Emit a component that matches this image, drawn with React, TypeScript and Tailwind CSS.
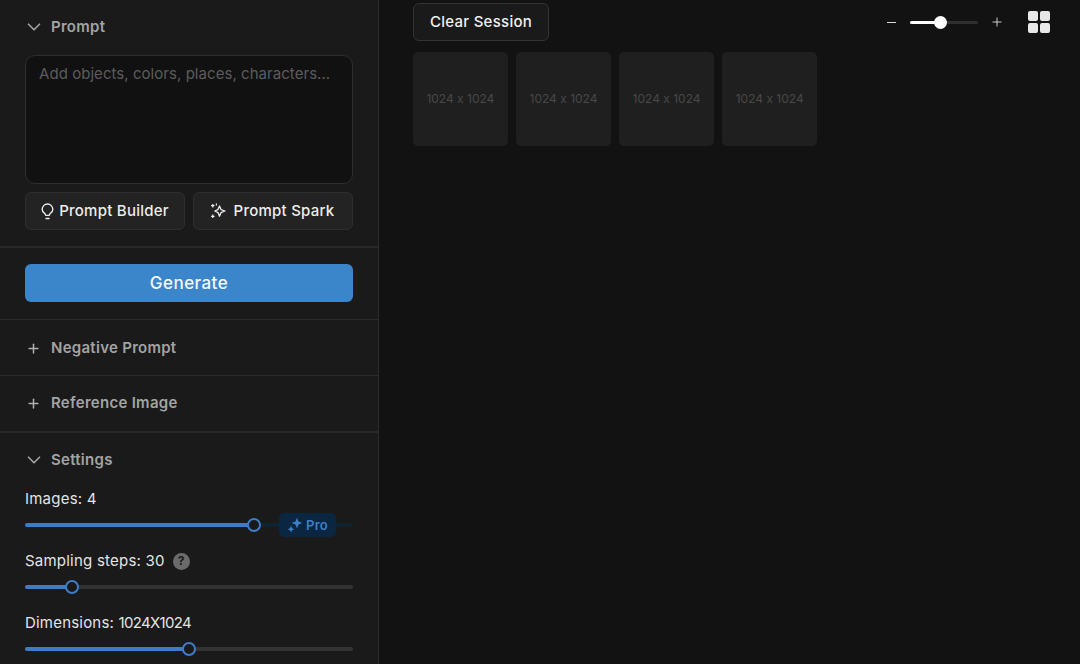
import { ChevronDown, Plus } from "lucide-react";

const FONT = "font-['Inter','Liberation_Sans',sans-serif]";

function SectionHeader({ title, open }: { title: string; open?: boolean }) {
  return (
    <div className="flex h-[20px] items-center gap-[10px] pl-[26px] text-[#a3a3a3]">
      {open ? (
        <ChevronDown className="-mx-[3.5px] h-[22px] w-[22px] shrink-0" strokeWidth={1.8} />
      ) : (
        <Plus className="h-[15px] w-[15px] shrink-0 text-[#b0b0b0]" strokeWidth={2.4} />
      )}
      <span className="text-[15px] font-semibold leading-[20px] tracking-[0.28px]">{title}</span>
    </div>
  );
}

function Slider({ percent, locked }: { percent: number; locked?: boolean }) {
  return (
    <div className={`relative h-[4px] rounded-full ${locked ? "bg-[#10242f]" : "bg-[#333333]"}`}>
      <div
        className="absolute left-0 top-0 h-[4px] rounded-full bg-[#3f7cc8]"
        style={{ width: `${percent}%` }}
      />
      <div
        className="absolute top-[-5px] ml-[-7px] h-[14px] w-[14px] rounded-full border-2 border-[#3f7cc8] bg-[#1a1a1a]"
        style={{ left: `${percent}%` }}
      />
      {locked && (
        <div className="absolute left-[254px] top-[-10px] flex h-[24px] w-[57px] items-center justify-center gap-[3px] rounded-[5px] bg-[#0b2640] text-[#3f7fc4]">
          <svg viewBox="0 0 16 16" className="h-[16px] w-[16px]" fill="currentColor">
            <path d="M10 .8 11.5 4.6 15.4 6 11.5 7.5 10 11.4 8.5 7.5 4.6 6 8.5 4.6z" />
            <path d="M4 8.8 5 11.2 7.4 12.2 5 13.2 4 15.6 3 13.2.6 12.2 3 11.2z" />
          </svg>
          <span className="text-[13px] font-semibold">Pro</span>
        </div>
      )}
    </div>
  );
}

function OutlineButton({ children, className }: { children: React.ReactNode; className: string }) {
  return (
    <button
      className={`flex h-[38px] items-center justify-center rounded-[6px] border border-[#2e2e2e] bg-[#232323] pr-[2px] text-[15px] font-medium tracking-[0.25px] text-[#ededed] ${className}`}
    >
      {children}
    </button>
  );
}

export default function App() {
  return (
    <div className={`flex h-[664px] w-[1080px] overflow-hidden bg-[#121212] ${FONT}`}>
      {/* Left side - form */}
      <aside className="h-full w-[379px] shrink-0 border-r border-[#2c2c2c] bg-[#1a1a1a]">
        <div className="border-b-2 border-[#282828] pb-[16px] pt-[17px]">
          <SectionHeader title="Prompt" open />
          <div className="mx-[25px] mt-[18px]">
            <div className="h-[129px] whitespace-nowrap rounded-[10px] border border-[#2e2e2e] bg-[#111111] px-[13px] py-[8px] text-[15px] leading-[20px] tracking-[0.05px] text-[#5c5c5c]">
              Add objects, colors, places, characters...
            </div>
            <div className="mt-[8px] flex gap-[8px]">
              <OutlineButton className="w-[160px] gap-[3px]">
                <svg viewBox="0 0 16 16" className="h-[17px] w-[17px]" fill="none" stroke="currentColor" strokeWidth="1.3" strokeLinecap="round" strokeLinejoin="round">
                  <path d="M6.3 11.6C6.3 9.8 3 8.9 3 6a5 5 0 0 1 10 0c0 2.9-3.3 3.8-3.3 5.6z" />
                  <path d="M6.6 14.6h2.8" />
                </svg>
                Prompt Builder
              </OutlineButton>
              <OutlineButton className="w-[160px] gap-[8px]">
                <svg viewBox="0 0 16 16" className="h-[16px] w-[16px]" fill="none" stroke="currentColor" strokeWidth="1.3" strokeLinejoin="round">
                  <path d="M9.5 3 11 6.6 15 8 11 9.6 9.5 13.2 8 9.6 4.8 8 8 6.6z" />
                  <path d="M2.8 1v3.4M1.1 2.7h3.4M2.8 11.6V15M1.1 13.3h3.4M6.4 .6v2" strokeWidth="1.2" />
                </svg>
                Prompt Spark
              </OutlineButton>
            </div>
          </div>
        </div>

        <div className="border-b border-[#2c2c2c] px-[25px] pb-[17px] pt-[16px]">
          <button className="flex h-[38px] w-full items-center justify-center rounded-[6px] bg-[#3b86cb] pt-[2px] text-[17px] font-medium tracking-[0.45px] text-[#f4f8fc]">
            Generate
          </button>
        </div>

        <div className="border-b border-[#2c2c2c] pb-[17px] pt-[18px]">
          <SectionHeader title="Negative Prompt" />
        </div>
        <div className="border-b-2 border-[#282828] pb-[18px] pt-[17px]">
          <SectionHeader title="Reference Image" />
        </div>

        <div className="pt-[17px]">
          <SectionHeader title="Settings" open />
          <div className="mt-[19px] px-[25px] text-[15px] leading-[20px] tracking-[0.22px] text-[#e4e4e4]">
            <div>Images: 4</div>
            <div className="mb-[24px] mt-[14px]">
              <Slider percent={69.8} locked />
            </div>
            <div className="flex items-center gap-[8px]">
              Sampling steps: 30
              <span className="flex h-[17px] w-[17px] items-center justify-center rounded-full bg-[#6b6b6b] text-[12px] font-bold text-[#1a1a1a]">
                ?
              </span>
            </div>
            <div className="mb-[24px] mt-[14px]">
              <Slider percent={14.3} />
            </div>
            <div className="tracking-[0.2px]">
              Dimensions: <span className="tracking-[-0.68px]">1024X1024</span>
            </div>
            <div className="mt-[14px]">
              <Slider percent={50} />
            </div>
          </div>
        </div>
      </aside>

      {/* Right side - results */}
      <main className="min-w-0 flex-1 pl-[34px] pr-[30px] pt-[3px]">
        <div className="flex items-center justify-between">
          <button className="h-[38px] w-[136px] rounded-[6px] border border-[#333333] bg-[#1a1a1a] text-[15px] font-medium tracking-[0.28px] text-[#f0f0f0]">
            Clear Session
          </button>
          <div className="flex items-center">
            <span className="mr-[14px] h-[1px] w-[9px] bg-[#d8d8d8]" />
            <div className="relative h-[3px] w-[68px] rounded-full bg-[#2f2f2f]">
              <div className="h-[3px] w-[30px] rounded-full bg-white" />
              <div className="absolute left-[24px] top-[-5px] h-[13px] w-[13px] rounded-full bg-white" />
            </div>
            <Plus className="ml-[12px] h-[14px] w-[14px] text-[#d8d8d8]" strokeWidth={1.6} />
            <div className="ml-[24px] grid grid-cols-2 gap-[2px]">
              <span className="h-[10px] w-[10px] rounded-[2px] bg-[#e8e8e8]" />
              <span className="h-[10px] w-[10px] rounded-[2px] bg-[#e8e8e8]" />
              <span className="h-[10px] w-[10px] rounded-[2px] bg-[#e8e8e8]" />
              <span className="h-[10px] w-[10px] rounded-[2px] bg-[#e8e8e8]" />
            </div>
          </div>
        </div>
        <div className="mt-[11px] flex gap-[8.3px]">
          {[0, 1, 2, 3].map((i) => (
            <div
              key={i}
              className="flex h-[94px] w-[94.8px] items-center justify-center rounded-[5px] bg-[#1f1f1f] text-[12px] text-[#484848] [font-feature-settings:'calt'_0]"
            >
              1024 x 1024
            </div>
          ))}
        </div>
      </main>
    </div>
  );
}
